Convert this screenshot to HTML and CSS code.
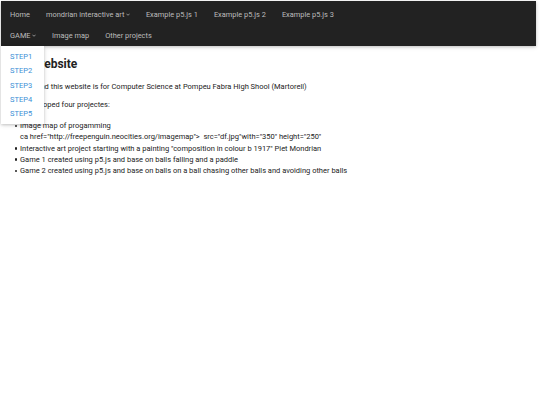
FILE: index.html
```html
<!DOCTYPE html>
<html lang="en">
<head>
    <meta charset="UTF-8">
    <meta name="viewport" content="width=device-width, initial-scale=1.0">
    <title>Pau's website</title>
    <link rel="stylesheet" href="styles.css">
</head>
<body>
    <!-- Top navigation -->
    <nav class="topbar">
        <div class="bar-row">
            <a href="#" class="bar-item">Home</a>
            <div class="dropdown">
                <button class="bar-item">mondrian interactive art
                    <svg class="caret" viewBox="0 0 10 6"><path d="M1 1l4 4 4-4" /></svg>
                </button>
            </div>
            <a href="#" class="bar-item">Example p5.js 1</a>
            <a href="#" class="bar-item">Example p5.js 2</a>
            <a href="#" class="bar-item">Example p5.js 3</a>
        </div>
        <div class="bar-row">
            <div class="dropdown">
                <button class="bar-item">GAME
                    <svg class="caret" viewBox="0 0 10 6"><path d="M1 1l4 4 4-4" /></svg>
                </button>
                <!-- open menu -->
                <div class="dropdown-menu">
                    <a href="#">STEP1</a>
                    <a href="#">STEP2</a>
                    <a href="#">STEP3</a>
                    <a href="#">STEP4</a>
                    <a href="#">STEP5</a>
                </div>
            </div>
            <a href="#" class="bar-item">Image map</a>
            <a href="#" class="bar-item">Other projects</a>
        </div>
    </nav>

    <div class="content">
        <h3>Pau's website</h3>
        <p>I'm Paula and this website is for Computer Science at Pompeu Fabra High Shool (Martorell)</p>
        <p>I have developed four projectes:</p>
        <ul>
            <li>Image map of progamming<br>ca href="http://freepenguin.neocities.org/imagemap"&gt;&nbsp; src="df.jpg"with="350" height="250"</li>
            <li>Interactive art project starting with a painting "composition in colour b 1917" Piet Mondrian</li>
            <li>Game 1 created using p5.js and base on balls falling and a paddle</li>
            <li>Game 2 created using p5.js and base on balls on a ball chasing other balls and avoiding other balls</li>
        </ul>
    </div>
</body>
</html>
```

FILE: styles.css
```css
/* General Styles */
* {
    box-sizing: border-box;
}

body {
    margin: 0;
    background: #fff;
    color: #222;
    font-family: 'Roboto', 'Liberation Sans', sans-serif;
    font-size: 7.5px;
    line-height: 1.5;
}

/* Top navigation */
.topbar {
    margin: 1px 4px 0 1px;
    padding: 3px 0 0 1px;
    background-color: #222;
    box-shadow: 0 1px 2.5px 0 rgba(0, 0, 0, 0.16), 0 1px 5px 0 rgba(0, 0, 0, 0.12);
    position: relative;
    z-index: 5;
}

.bar-row {
    display: flex;
    align-items: center;
    height: 21px;
}

.bar-item {
    display: flex;
    align-items: center;
    gap: 1.5px;
    height: 21px;
    padding: 0 8px;
    color: #bdbdbd;
    text-decoration: none;
    background: transparent;
    border: none;
    font-family: inherit;
    font-size: 7.42px;
    line-height: 1.5;
    cursor: pointer;
}

.caret {
    width: 4px;
    height: 3px;
    fill: none;
    stroke: #bdbdbd;
    stroke-width: 1.8;
}

.dropdown {
    position: relative;
}

.dropdown-menu {
    position: absolute;
    top: 21px;
    left: -1px;
    width: 43px;
    padding: 4px 0 3px;
    background: #fff;
    box-shadow: 0 1px 2.5px 0 rgba(0, 0, 0, 0.16), 0 1px 5px 0 rgba(0, 0, 0, 0.12);
    display: flex;
    flex-direction: column;
}

.dropdown-menu a {
    display: block;
    height: 14.3px;
    line-height: 14.3px;
    padding-left: 9px;
    color: #3a8fd6;
    text-decoration: none;
}

/* Page content */
.content {
    padding: 0 4px;
}

.content h3 {
    margin: 9px 0 7px;
    font-size: 12px;
    font-weight: 700;
    line-height: 18px;
}

.content p {
    margin: 7.5px 0;
}

.content ul {
    margin: 9.5px 0;
    padding-left: 16px;
    list-style: none;
}

.content li {
    position: relative;
}

.content li::before {
    content: '';
    position: absolute;
    left: -5.5px;
    top: 4.5px;
    width: 2.5px;
    height: 2.5px;
    border-radius: 50%;
    background: #222;
}
```
